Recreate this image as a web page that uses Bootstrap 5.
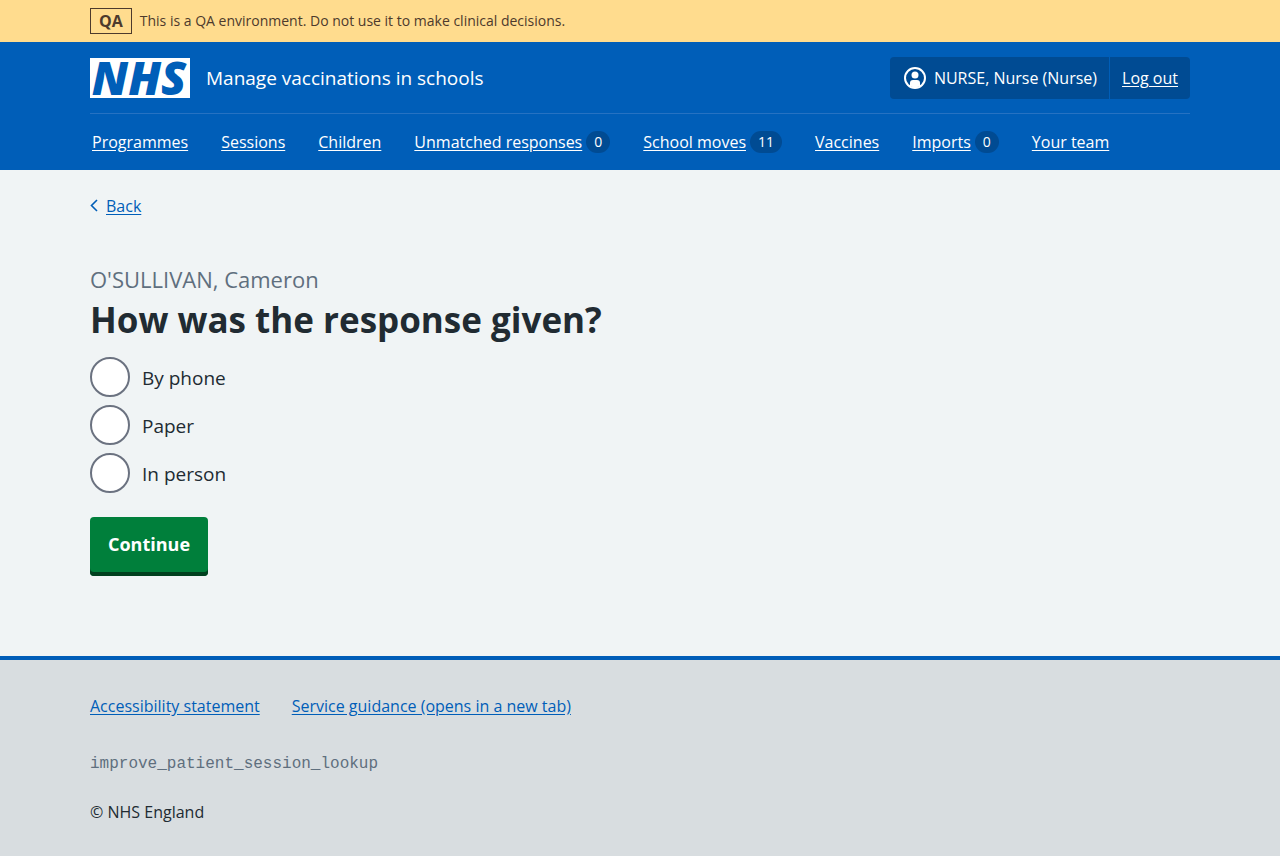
<!DOCTYPE html>
<html lang="en">
<head>
<meta charset="utf-8">
<meta name="viewport" content="width=device-width, initial-scale=1">
<title>How was the response given? – Manage vaccinations in schools</title>
<link rel="stylesheet" href="https://cdn.jsdelivr.net/npm/bootstrap@5.3.0/dist/css/bootstrap.min.css">
<style>
  :root { --blue: #005eb8; --blue-dark: #004b93; --ink: #212b32; --muted: #5f6f7e; }
  body {
    font-family: "Open Sans", "Noto Sans", sans-serif;
    font-size: 16px; line-height: 24px;
    color: var(--ink); background: #f0f4f5;
  }
  a { color: var(--blue); text-underline-offset: 2px; }
  .page-width { width: 100%; max-width: 1132px; margin: 0 auto; padding: 0 16px; }

  .env-banner { background: #ffdc8e; color: #4d3a2c; font-size: 14px; }
  .env-tag { border: 1px solid #4d3a2c; font-size: 16px; font-weight: 700; padding: 0 8px; }

  .site-header { background: var(--blue); color: #fff; }
  .site-header a { color: #fff; }
  .masthead { border-bottom: 1px solid #2672c2; padding: 15px 0 14px; }
  .nhs-logo { width: 100px; height: 40px; overflow: visible; }
  .service-name { font-size: 19px; }
  .account { background: var(--blue-dark); line-height: 42px; }
  .account > * { padding: 0 12px; }
  .account > * + * { border-left: 1px solid var(--blue); }
  .main-nav { padding: 16px 2px; gap: 0 33px; }
  .count-pill { background: var(--blue-dark); font-size: 14px; font-weight: 400; line-height: 22px; padding: 0 8px; }

  .caption-text { display: block; font-size: 22px; font-weight: 400; line-height: 26px; margin-bottom: 6px; color: var(--muted); }
  .question { font-size: 35px; font-weight: 700; line-height: 44px; margin: 0 0 15px; }
  .question-form { padding: 48px 0 79px; }
  .choice { padding: 0; margin: 0 0 8px; min-height: 40px; font-size: 19px; }
  .choice .form-check-label { padding-top: 2px; }
  .form-check.choice .form-check-input {
    float: none; width: 40px; height: 40px; margin: 0;
    border: 2px solid #6b7280; background-color: #fff;
  }
  .btn-continue {
    background: #007f3b; color: #fff; border: 0; border-radius: 4px;
    box-shadow: inset 0 -4px 0 #00401e;
    font-size: 18px; font-weight: 700; line-height: 28px; padding: 13px 18px 18px;
  }
  .btn-continue:hover { background: #00662f; color: #fff; }

  .site-footer { background: #d8dde0; border-top: 4px solid var(--blue); padding: 34px 0 32px; }
  .footer-links { margin-bottom: 34px; }
  .build-name { font-family: "Liberation Mono", monospace; color: var(--muted); }
</style>
</head>
<body class="d-flex flex-column min-vh-100">

<div class="env-banner">
  <div class="page-width d-flex align-items-center gap-2 py-2">
    <strong class="env-tag">QA</strong>
    <span>This is a QA environment. Do not use it to make clinical decisions.</span>
  </div>
</div>

<header class="site-header">
  <div class="page-width">
    <div class="masthead d-flex flex-wrap align-items-center justify-content-between gap-3">
      <div class="d-flex align-items-center gap-3">
        <svg class="nhs-logo" viewBox="0 0 100 40" role="img" aria-label="NHS">
          <rect width="100" height="40" fill="#fff"/>
          <text x="49" y="37" text-anchor="middle" fill="#005eb8" font-family="Open Sans" font-size="46" font-weight="800" font-style="italic">NHS</text>
        </svg>
        <span class="service-name">Manage vaccinations in schools</span>
      </div>
      <div class="account d-flex rounded-1">
        <span class="d-flex align-items-center gap-2">
          <svg width="24" height="24" viewBox="0 0 24 24" aria-hidden="true">
            <circle cx="13" cy="12" r="10" fill="none" stroke="#fff" stroke-width="2"/>
            <circle cx="13" cy="9" r="3.500" fill="#fff"/>
            <path d="M8 20v-3a3 3 0 0 1 3-3h4a3 3 0 0 1 3 3v3a10 10 0 0 1-10 0z" fill="#fff"/>
          </svg>
          NURSE, Nurse (Nurse)
        </span>
        <a href="#">Log out</a>
      </div>
    </div>
    <nav class="main-nav d-flex flex-wrap" aria-label="Main">
      <a href="#">Programmes</a>
      <a href="#">Sessions</a>
      <a href="#">Children</a>
      <span class="d-flex align-items-center gap-1"><a href="#">Unmatched responses</a><span class="badge rounded-pill count-pill">0</span></span>
      <span class="d-flex align-items-center gap-1"><a href="#">School moves</a><span class="badge rounded-pill count-pill">11</span></span>
      <a href="#">Vaccines</a>
      <span class="d-flex align-items-center gap-1"><a href="#">Imports</a><span class="badge rounded-pill count-pill">0</span></span>
      <a href="#">Your team</a>
    </nav>
  </div>
</header>

<main class="page-width flex-grow-1 pt-4">
  <div class="d-flex align-items-center gap-2">
    <svg width="8" height="14" viewBox="0 0 8 14" aria-hidden="true"><path d="M7 1L1.500 6.500 7 12" fill="none" stroke="#005eb8" stroke-width="1.600"/></svg>
    <a href="#">Back</a>
  </div>
  <form class="question-form">
    <h1 class="question"><span class="caption-text">O'SULLIVAN, Cameron</span>How was the response given?</h1>
    <div class="form-check choice d-flex align-items-center">
      <input class="form-check-input" type="radio" name="route" id="route-phone">
      <label class="form-check-label ps-2 ms-1" for="route-phone">By phone</label>
    </div>
    <div class="form-check choice d-flex align-items-center">
      <input class="form-check-input" type="radio" name="route" id="route-paper">
      <label class="form-check-label ps-2 ms-1" for="route-paper">Paper</label>
    </div>
    <div class="form-check choice d-flex align-items-center">
      <input class="form-check-input" type="radio" name="route" id="route-person">
      <label class="form-check-label ps-2 ms-1" for="route-person">In person</label>
    </div>
    <button type="submit" class="btn btn-continue mt-3">Continue</button>
  </form>
</main>

<footer class="site-footer">
  <div class="page-width">
    <div class="footer-links d-flex flex-wrap gap-4">
      <a href="#" class="me-2">Accessibility statement</a>
      <a href="#">Service guidance (opens in a new tab)</a>
    </div>
    <p class="build-name mb-4">improve_patient_session_lookup</p>
    <p class="mb-0">© NHS England</p>
  </div>
</footer>

<script src="https://cdn.jsdelivr.net/npm/bootstrap@5.3.0/dist/js/bootstrap.bundle.min.js"></script>
</body>
</html>
